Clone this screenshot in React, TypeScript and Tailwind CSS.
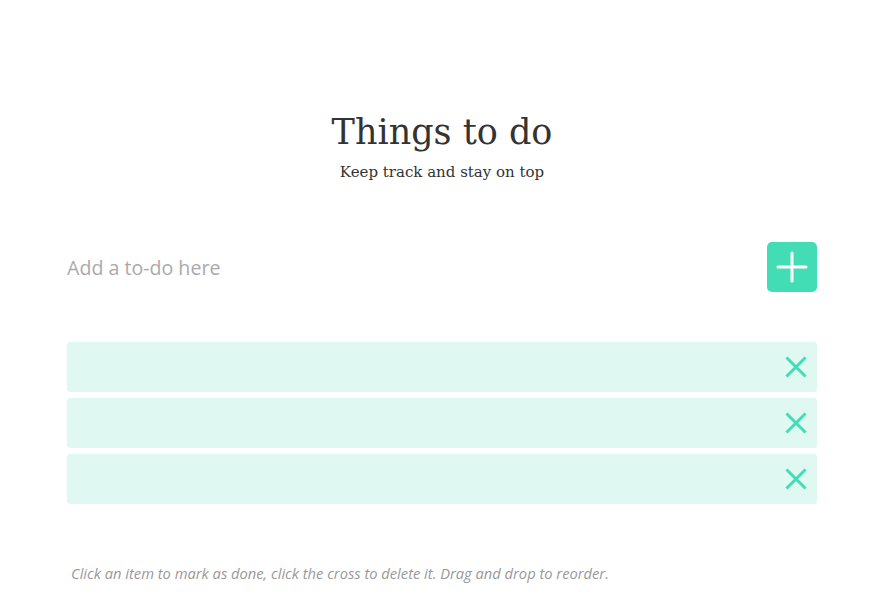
import { Plus } from 'lucide-react';

const items = [1, 2, 3];

function Cross() {
  return (
    <svg width="22" height="22" viewBox="0 0 22 22" className="text-[#42ddb5]">
      <path d="M1.5 1.5 L20.5 20.5 M20.5 1.5 L1.5 20.5" stroke="currentColor" strokeWidth="3" fill="none" />
    </svg>
  );
}

export default function App() {
  return (
    <div className="min-h-screen w-full bg-white flex justify-center pl-[7px]">
      <div className="w-[750px] flex flex-col">
        {/* Header */}
        <div className="pt-[108px] flex flex-col items-center">
          <h1 className="text-[35px] leading-[48px] text-[#333] font-['DejaVu_Serif',serif]">Things to do</h1>
          <p className="mt-[6px] text-[15px] leading-[20px] text-[#333] font-['DejaVu_Serif',serif]">Keep track and stay on top</p>
        </div>

        {/* Input row */}
        <div className="mt-[60px] flex items-center justify-between">
          <input
            placeholder="Add a to-do here"
            className="flex-1 bg-transparent outline-none pt-[2px] text-[19.6px] text-[#555] placeholder:text-[#aaa] font-['Open_Sans',sans-serif]"
          />
          <button className="w-[50px] h-[50px] rounded-[5px] bg-[#42ddb5] flex items-center justify-center">
            <Plus size={48} strokeWidth={1.5} className="text-white" />
          </button>
        </div>

        {/* List */}
        <ul className="mt-[50px] flex flex-col gap-[6px]">
          {items.map((i) => (
            <li key={i} className="h-[50px] rounded-[3px] bg-[#e0f8f2] flex items-center justify-end pr-[10px]">
              <Cross />
            </li>
          ))}
        </ul>

        {/* Footer hint */}
        <p className="mt-[58px] pl-[4px] text-[14.7px] italic text-[#999] font-['Open_Sans',sans-serif]">
          Click an item to mark as done, click the cross to delete it. Drag and drop to reorder.
        </p>
      </div>
    </div>
  );
}
